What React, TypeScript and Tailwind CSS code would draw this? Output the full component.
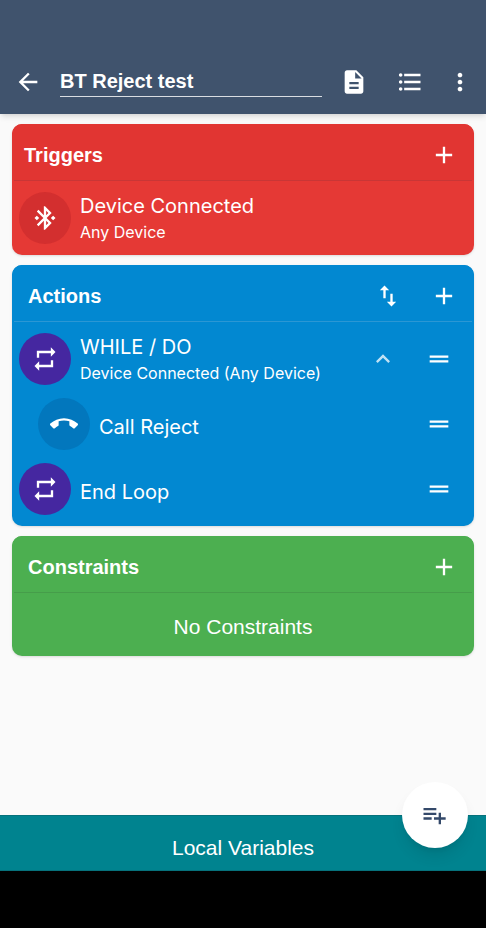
import React, { useState } from 'react';
import {
    MdAdd,
    MdArrowBack,
    MdBluetoothConnected,
    MdCallEnd,
    MdDescription,
    MdDragHandle,
    MdExpandLess,
    MdFormatListBulleted,
    MdMoreVert,
    MdPlaylistAdd,
    MdRepeat,
    MdSwapVert,
} from 'react-icons/md';

// ─── Types ───────────────────────────────────────────────────────────

interface MacroItem {
    title: string;
    detail?: string;
    icon: React.ReactNode;
    circle: string;
    indented?: boolean;
    collapsible?: boolean;
    draggable?: boolean;
}

interface SectionProps {
    title: string;
    color: string;
    headerColor: string;
    divider: string;
    titleInset: string;
    sortable?: boolean;
    children: React.ReactNode;
}

// ─── Constants ───────────────────────────────────────────────────────

const TRIGGERS: MacroItem[] = [
    {
        title: 'Device Connected',
        detail: 'Any Device',
        icon: <MdBluetoothConnected size={28} />,
        circle: 'bg-[#d32f2f]',
    },
];

const ACTIONS: MacroItem[] = [
    {
        title: 'WHILE / DO',
        detail: 'Device Connected (Any Device)',
        icon: <MdRepeat size={28} />,
        circle: 'bg-[#4527a0]',
        collapsible: true,
        draggable: true,
    },
    {
        title: 'Call Reject',
        icon: <MdCallEnd size={28} />,
        circle: 'bg-[#0277bd]',
        indented: true,
        draggable: true,
    },
    {
        title: 'End Loop',
        icon: <MdRepeat size={28} />,
        circle: 'bg-[#4527a0]',
        draggable: true,
    },
];

// ─── Item Row ────────────────────────────────────────────────────────

function ItemRow({ item }: { item: MacroItem }) {
    return (
        <li className={`flex h-[65px] items-center pr-[21px] ${item.indented ? 'pl-[26px]' : 'pl-[7px]'}`}>
            <div className={`flex h-[52px] w-[52px] shrink-0 items-center justify-center rounded-full ${item.circle}`}>
                {item.icon}
            </div>
            <div className="ml-[9px] min-w-0 flex-1 font-['Inter',sans-serif]">
                <p className={`text-[20px] leading-7 ${item.detail ? '' : 'pt-[6px]'}`}>{item.title}</p>
                {item.detail && <p className="text-[16px] leading-6">{item.detail}</p>}
            </div>
            {item.collapsible && (
                <button type="button" aria-label="Collapse" className="mr-7 text-white/75">
                    <MdExpandLess size={28} />
                </button>
            )}
            {item.draggable && (
                <button type="button" aria-label="Reorder">
                    <MdDragHandle size={28} />
                </button>
            )}
        </li>
    );
}

// ─── Section Card ────────────────────────────────────────────────────

function Section({ title, color, headerColor, divider, titleInset, sortable, children }: SectionProps) {
    return (
        <section className={`overflow-hidden rounded-[10px] shadow-sm ${color}`}>
            <div className={`flex h-14 items-center pt-[6px] pr-4 ${headerColor} ${titleInset}`}>
                <h2 className="flex-1 text-[20px] leading-7 font-bold">{title}</h2>
                {sortable && (
                    <button type="button" aria-label="Sort actions" className="mr-7">
                        <MdSwapVert size={28} />
                    </button>
                )}
                <button type="button" aria-label={`Add to ${title}`}>
                    <MdAdd size={28} />
                </button>
            </div>
            <div className={`mx-[2px] border-t ${divider}`} />
            {children}
        </section>
    );
}

// ─── App ─────────────────────────────────────────────────────────────

export default function App() {
    const [name, setName] = useState('BT Reject test');

    return (
        <div className="flex min-h-screen flex-col bg-[#fafafa] font-['Liberation_Sans',sans-serif] text-white">
            {/* ── Toolbar ── */}
            <header className="flex items-center bg-[#40536d] pt-[66px] pr-3 pb-[17px] pl-[14px] shadow-md">
                <button type="button" aria-label="Back">
                    <MdArrowBack size={28} />
                </button>
                <input
                    type="text"
                    aria-label="Macro name"
                    value={name}
                    onChange={(e) => setName(e.target.value)}
                    className="ml-[18px] h-[31px] min-w-0 flex-1 border-b border-white/80 bg-transparent text-[20px] font-bold outline-none"
                />
                <div className="ml-[18px] flex items-center">
                    <button type="button" aria-label="Description" className="mr-7">
                        <MdDescription size={28} />
                    </button>
                    <button type="button" aria-label="Log" className="mr-[22px]">
                        <MdFormatListBulleted size={28} />
                    </button>
                    <button type="button" aria-label="More options">
                        <MdMoreVert size={28} />
                    </button>
                </div>
            </header>

            {/* ── Macro sections ── */}
            <main className="flex flex-1 flex-col gap-[10px] px-3 py-[10px]">
                <Section
                    title="Triggers"
                    color="bg-[#e53935]"
                    headerColor="bg-[#e13532]"
                    divider="border-[#c93636]"
                    titleInset="pl-3"
                >
                    <ul className="pt-1 pb-[5px]">
                        {TRIGGERS.map((item) => (
                            <ItemRow key={item.title} item={item} />
                        ))}
                    </ul>
                </Section>

                <Section
                    title="Actions"
                    color="bg-[#0288d1]"
                    headerColor="bg-[#0288d1]"
                    divider="border-[#2b97d4]"
                    titleInset="pl-4"
                    sortable
                >
                    <ul className="pt-1 pb-[5px]">
                        {ACTIONS.map((item) => (
                            <ItemRow key={item.title} item={item} />
                        ))}
                    </ul>
                </Section>

                <Section
                    title="Constraints"
                    color="bg-[#4caf50]"
                    headerColor="bg-[#4caf50]"
                    divider="border-[#469d4a]"
                    titleInset="pl-4"
                >
                    <p className="pt-5 pb-[15px] text-center text-[21px] leading-7">No Constraints</p>
                </Section>
            </main>

            {/* ── Local variables ── */}
            <footer className="relative">
                <button
                    type="button"
                    className="block h-14 w-full border-y border-[#06717b] bg-[#00838f] pt-[10px] text-[21px] leading-7"
                >
                    Local Variables
                </button>
                <button
                    type="button"
                    aria-label="Add action block"
                    className="absolute -top-[33px] right-[18px] flex h-[66px] w-[66px] items-center justify-center rounded-full bg-white pr-[2px] text-[#34496a] shadow-lg"
                >
                    <MdPlaylistAdd size={28} />
                </button>
            </footer>
            <div className="h-[57px] bg-black" />
        </div>
    );
}
